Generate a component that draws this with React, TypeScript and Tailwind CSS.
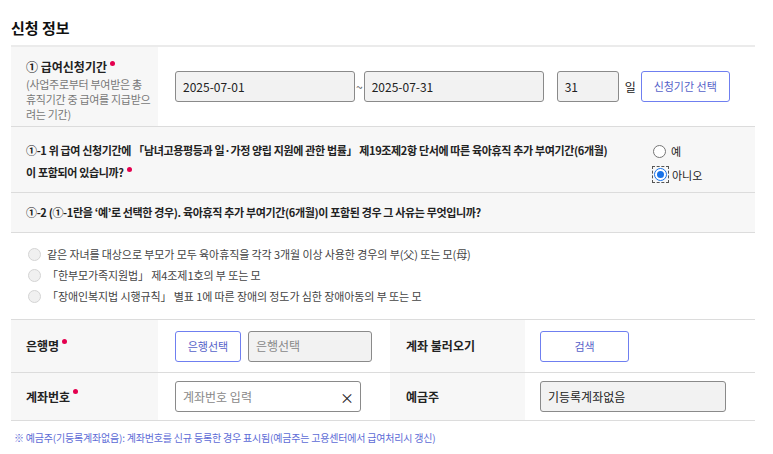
import React from 'react';

const font = { fontFamily: '"Noto Sans CJK KR", "Noto Sans", sans-serif' };

const Req = () => <span className="ml-[3px] inline-block h-[5px] w-[5px] -translate-y-[5px] rounded-full bg-[#e4004f] align-middle" />;

const Radio = ({ checked, disabled }: { checked?: boolean; disabled?: boolean }) => {
  if (disabled) {
    return <span className="inline-block h-[13px] w-[13px] shrink-0 rounded-full border border-[#d4d4d4] bg-[#f0f0f0]" />;
  }
  if (checked) {
    return (
      <span className="inline-flex h-[15px] w-[15px] items-center justify-center outline-1 outline-dashed outline-[#555]">
        <span className="flex h-[13px] w-[13px] items-center justify-center rounded-full border border-[#1a73e8] bg-white">
          <span className="h-[7px] w-[7px] rounded-full bg-[#1a73e8]" />
        </span>
      </span>
    );
  }
  return <span className="inline-block h-[13px] w-[13px] rounded-full border border-[#767676] bg-white" />;
};

export default function App() {
  return (
    <div className="h-[454px] w-[773px] bg-white pl-[11px] pr-[18px] text-[#222]" style={font}>
      <h2 className="pt-[18px] pb-[7px] text-[15px] font-bold leading-[20px] text-[#111]">신청 정보</h2>
      <div className="border-t-2 border-[#ebebeb]">
        {/* row 1 */}
        <div className="flex h-[80px] border-b border-[#dcdcdc]">
          <div className="w-[147px] bg-[#f7f7f7] pl-[15px] pt-[12px]">
            <div className="text-[12px] font-bold leading-[16px]">
              ① 급여신청기간<Req />
            </div>
            <div className="mt-[2px] text-[11px] leading-[15px] tracking-[-0.3px] text-[#777]">
              (사업주로부터 부여받은 총<br />휴직기간 중 급여를 지급받으<br />려는 기간)
            </div>
          </div>
          <div className="flex flex-1 items-center pl-[17px]">
            <div className="flex h-[31px] w-[180px] items-center rounded-[3px] border border-[#8a8a8a] bg-[#f2f2f2] px-[7px] text-[12px]">2025-07-01</div>
            <span className="mx-[1px] text-[12px] text-[#555]">~</span>
            <div className="flex h-[31px] w-[180px] items-center rounded-[3px] border border-[#8a8a8a] bg-[#f2f2f2] px-[7px] text-[12px]">2025-07-31</div>
            <div className="ml-[13px] flex h-[31px] w-[62px] items-center rounded-[3px] border border-[#8a8a8a] bg-[#f2f2f2] px-[7px] text-[12px]">31</div>
            <span className="ml-[6px] text-[12px]">일</span>
            <button className="ml-[5px] h-[31px] w-[89px] rounded-[3px] border border-[#6f7ff0] bg-white text-[11px] text-[#5662c9]">신청기간 선택</button>
          </div>
        </div>
        {/* row 2 */}
        <div className="flex h-[66px] items-start border-b border-[#dcdcdc] bg-[#f7f7f7] pl-[15px] pt-[12px]">
          <div className="w-[620px] whitespace-nowrap text-[11px] font-bold leading-[22px] tracking-[-0.35px]">
            ①-1 위 급여 신청기간에 「남녀고용평등과 일·가정 양립 지원에 관한 법률」 제19조제2항 단서에 따른 육아휴직 추가 부여기간(6개월)
            <br />이 포함되어 있습니까?<Req />
          </div>
          <div className="ml-[7px] mt-[4px] flex flex-col gap-[7px] text-[11px]">
            <label className="flex items-center gap-[5px]"><Radio /> 예</label>
            <label className="flex items-center gap-[4px]"><Radio checked /> 아니오</label>
          </div>
        </div>
        {/* row 3 */}
        <div className="flex h-[40px] items-center whitespace-nowrap border-b border-[#dcdcdc] bg-[#f7f7f7] pl-[15px] text-[11px] font-bold tracking-[-0.35px]">
          ①-2 (①-1란을 ‘예’로 선택한 경우). 육아휴직 추가 부여기간(6개월)이 포함된 경우 그 사유는 무엇입니까?
        </div>
        {/* row 4 */}
        <div className="flex h-[87px] flex-col gap-[7px] border-b border-[#dcdcdc] pl-[17px] pt-[14px] text-[11px] tracking-[-0.1px] text-[#444]">
          <label className="flex items-center gap-[6px] leading-[14px]"><Radio disabled /> 같은 자녀를 대상으로 부모가 모두 육아휴직을 각각 3개월 이상 사용한 경우의 부(父) 또는 모(母)</label>
          <label className="flex items-center gap-[6px] leading-[14px]"><Radio disabled /> 「한부모가족지원법」 제4조제1호의 부 또는 모</label>
          <label className="flex items-center gap-[6px] leading-[14px]"><Radio disabled /> 「장애인복지법 시행규칙」 별표 1에 따른 장애의 정도가 심한 장애아동의 부 또는 모</label>
        </div>
        {/* row 5 */}
        <div className="flex h-[53px] border-b border-[#dcdcdc] text-[12px]">
          <div className="flex w-[147px] items-center bg-[#f7f7f7] pl-[15px] font-bold">은행명<Req /></div>
          <div className="flex w-[232px] items-center pl-[17px]">
            <button className="h-[31px] w-[66px] rounded-[3px] border border-[#6f7ff0] bg-white text-[11px] text-[#5662c9]">은행선택</button>
            <div className="ml-[7px] flex h-[31px] w-[124px] items-center rounded-[3px] border border-[#8a8a8a] bg-[#f2f2f2] px-[7px] text-[#888]">은행선택</div>
          </div>
          <div className="flex w-[135px] items-center bg-[#f7f7f7] pl-[16px] font-bold">계좌 불러오기</div>
          <div className="flex flex-1 items-center pl-[15px]">
            <button className="h-[31px] w-[89px] rounded-[3px] border border-[#6f7ff0] bg-white text-[11px] text-[#5662c9]">검색</button>
          </div>
        </div>
        {/* row 6 */}
        <div className="flex h-[48px] border-b border-[#dcdcdc] text-[12px]">
          <div className="flex w-[147px] items-center bg-[#f7f7f7] pl-[15px] font-bold">계좌번호<Req /></div>
          <div className="flex w-[232px] items-center pl-[17px]">
            <div className="flex h-[31px] w-[186px] items-center justify-between rounded-[3px] border border-[#8a8a8a] bg-white pl-[7px] pr-[6px] text-[#888]">
              계좌번호 입력
              <span className="text-[14px] leading-none text-[#222]">×</span>
            </div>
          </div>
          <div className="flex w-[135px] items-center bg-[#f7f7f7] pl-[16px] font-bold">예금주</div>
          <div className="flex flex-1 items-center pl-[15px]">
            <div className="flex h-[31px] w-[186px] items-center rounded-[3px] border border-[#8a8a8a] bg-[#f2f2f2] px-[7px]">기등록계좌없음</div>
          </div>
        </div>
        <div className="pl-[3px] pt-[9px] text-[10px] tracking-[-0.2px] text-[#5d6bd6]">
          ※ 예금주(기등록계좌없음): 계좌번호를 신규 등록한 경우 표시됨(예금주는 고용센터에서 급여처리시 갱신)
        </div>
      </div>
    </div>
  );
}
